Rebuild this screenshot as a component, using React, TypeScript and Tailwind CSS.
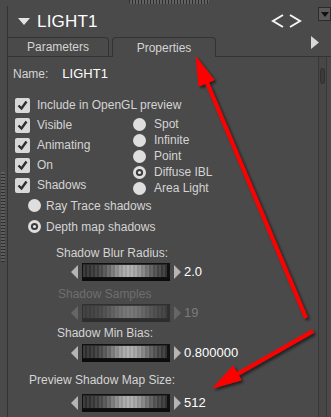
import type { ReactNode } from "react";

const STRIPES = Array.from({ length: 42 }, (_, i) => {
  const t = i / 41;
  // brightest a bit right of centre, dark at both ends
  const peak = Math.exp(-Math.pow((t - 0.55) / 0.28, 2));
  const wobble = i % 2 === 0 ? 10 : -6;
  return Math.round(48 + peak * 120 + wobble);
});

function Dial({ disabled = false }: { disabled?: boolean }) {
  return (
    <svg width="88" height="18" viewBox="0 0 88 18" className={disabled ? "opacity-45" : ""}>
      <rect x="0" y="0" width="88" height="18" fill="#111" />
      {STRIPES.map((v, i) => (
        <rect key={i} x={1 + i * 2} y={1} width={2} height={13} fill={`rgb(${v},${v},${v})`} />
      ))}
      <rect x="1" y="1" width="84" height="1" fill="#2a2a2a" />
      <rect x="0" y="15" width="88" height="3" fill="#0c0c0c" />
    </svg>
  );
}

function Arrow({ dir, disabled }: { dir: "l" | "r"; disabled?: boolean }) {
  const fill = disabled ? "#666" : "#b5b5b5";
  return (
    <svg width="7" height="14" viewBox="0 0 7 14">
      {dir === "l" ? <polygon points="7,0 0,7 7,14" fill={fill} /> : <polygon points="0,0 7,7 0,14" fill={fill} />}
    </svg>
  );
}

function DialRow({ value, disabled = false }: { value: string; disabled?: boolean }) {
  return (
    <div className="flex items-center h-[18px] pl-[63px]">
      <Arrow dir="l" disabled={disabled} />
      <div className="ml-[4px]">
        <Dial disabled={disabled} />
      </div>
      <div className="ml-[4px]">
        <Arrow dir="r" disabled={disabled} />
      </div>
      <span className={`ml-[3px] text-[13px] ${disabled ? "text-[#7a7a7a]" : "text-white"}`}>{value}</span>
    </div>
  );
}

function CheckBox() {
  return (
    <svg width="15" height="15" viewBox="0 0 15 15" className="shrink-0">
      <rect x="0" y="0" width="15" height="15" rx="2" fill="#d9d9d9" />
      <polyline points="3.5,7.5 6.5,10.5 11.5,3.5" fill="none" stroke="#2e2e2e" strokeWidth="2.4" />
    </svg>
  );
}

function Radio({ on = false }: { on?: boolean }) {
  return (
    <svg width="13" height="13" viewBox="0 0 13 13" className="shrink-0">
      <circle cx="6.5" cy="6.5" r="6.5" fill="#dedede" />
      {on && (
        <>
          <circle cx="6.5" cy="6.5" r="3.6" fill="#3a3a3a" />
          <circle cx="6.5" cy="6.5" r="1.6" fill="#e6e6e6" />
        </>
      )}
    </svg>
  );
}

function CheckRow({ children }: { children: ReactNode }) {
  return (
    <div className="flex items-center h-[20px] gap-[7px]">
      <CheckBox />
      <span>{children}</span>
    </div>
  );
}

function RadioRow({ on, children }: { on?: boolean; children: ReactNode }) {
  return (
    <div className="flex items-center h-[16px] gap-[8px]">
      <Radio on={on} />
      <span>{children}</span>
    </div>
  );
}

export default function App() {
  return (
    <div className="relative w-[331px] h-[417px] overflow-hidden bg-[#4a4a4a] text-[12px] text-[#d4d4d4] font-['Liberation_Sans',Arial,sans-serif]">
      {/* top splitter grip */}
      <div className="flex justify-center h-[6px] pl-[6px]">
        <div className="w-[80px] h-[4px] bg-[repeating-linear-gradient(90deg,#2d2d2d_0px,#2d2d2d_1px,#626262_1px,#626262_3px)] rounded-b-[2px]" />
      </div>

      <div className="flex h-[411px]">
        {/* left gutter with splitter dots */}
        <div className="w-[7px] shrink-0 flex flex-col">
          <div className="mt-[166px] ml-[1px] w-[4px] h-[90px] bg-[repeating-linear-gradient(0deg,#2e2e2e_0px,#2e2e2e_1px,#5c5c5c_1px,#5c5c5c_3px)]" />
        </div>

        <div className="flex-1 flex flex-col border-l border-[#333]">
          {/* header */}
          <div className="flex items-center h-[31px]">
            <svg width="12" height="8" viewBox="0 0 12 8" className="ml-[10px]">
              <polygon points="0,0 12,0 6,7" fill="#e4e4e4" />
            </svg>
            <span className="ml-[7px] text-[17px] text-white tracking-[0.2px]">LIGHT1</span>
            <div className="ml-auto flex items-center gap-[5px] mr-[16px] -mt-[1px]">
              <svg width="13" height="14" viewBox="0 0 13 14">
                <polyline points="12,1 2,7 12,13" fill="none" stroke="#f4f4f4" strokeWidth="2" />
              </svg>
              <svg width="13" height="14" viewBox="0 0 13 14">
                <polyline points="1,1 11,7 1,13" fill="none" stroke="#f4f4f4" strokeWidth="2" />
              </svg>
            </div>
            <div className="self-start mt-[1px] w-[13px] h-[14px] border border-[#2b2b2b] bg-[#5a5a5a] flex items-center justify-center">
              <svg width="8" height="5" viewBox="0 0 8 5">
                <polygon points="0,0 8,0 4,5" fill="#111" />
              </svg>
            </div>
          </div>

          {/* tabs */}
          <div className="flex items-end h-[20px]">
            <div className="w-[101px] h-[20px] border-t border-r border-b border-[#333] rounded-tr-[4px] flex items-center justify-center">
              Parameters
            </div>
            <div className="w-[3px] border-b border-[#333]" />
            <div className="w-[104px] h-[20px] border-t border-l border-r border-[#333] rounded-t-[4px] flex items-center justify-center">
              Properties
            </div>
            <div className="flex-1 h-[20px] border-b border-[#333] flex justify-end">
              <svg width="8" height="13" viewBox="0 0 8 13" className="mr-[12px] -mt-[1px]">
                <polygon points="0,0 8,6.5 0,13" fill="#d8d8d8" />
              </svg>
            </div>
          </div>

          {/* content */}
          <div className="flex flex-1">
            <div className="flex-1 flex flex-col">
              <div className="flex items-center h-[16px] mt-[9px] pl-[5px]">
                <span>Name:</span>
                <span className="ml-[14px] text-white text-[13px]">LIGHT1</span>
              </div>

              <div className="mt-[13px] pl-[7px]">
                <CheckRow>Include in OpenGL preview</CheckRow>
                <div className="flex">
                  <div className="w-[118px]">
                    <CheckRow>Visible</CheckRow>
                    <CheckRow>Animating</CheckRow>
                    <CheckRow>On</CheckRow>
                    <CheckRow>Shadows</CheckRow>
                  </div>
                  <div className="pt-[1px]">
                    <RadioRow>Spot</RadioRow>
                    <RadioRow>Infinite</RadioRow>
                    <RadioRow>Point</RadioRow>
                    <RadioRow on>Diffuse IBL</RadioRow>
                    <RadioRow>Area Light</RadioRow>
                  </div>
                </div>
              </div>

              <div className="pl-[20px] -mt-[1px]">
                <div className="flex items-center h-[21px] gap-[5px]">
                  <Radio />
                  <span>Ray Trace shadows</span>
                </div>
                <div className="flex items-center h-[21px] gap-[5px]">
                  <Radio on />
                  <span>Depth map shadows</span>
                </div>
              </div>

              <div className="mt-[8px] h-[16px] flex items-center pl-[48px]">Shadow Blur Radius:</div>
              <div className="mt-[2px]">
                <DialRow value="2.0" />
              </div>

              <div className="mt-[5px] h-[16px] flex items-center pl-[50px] text-[#6e6e6e]">Shadow Samples</div>
              <div className="mt-[2px]">
                <DialRow value="19" disabled />
              </div>

              <div className="mt-[3px] h-[16px] flex items-center pl-[49px]">Shadow Min Bias:</div>
              <div className="mt-[3px]">
                <DialRow value="0.800000" />
              </div>

              <div className="mt-[10px] h-[16px] flex items-center pl-[21px]">Preview Shadow Map Size:</div>
              <div className="mt-[6px]">
                <DialRow value="512" />
              </div>
            </div>

            {/* scroll bar */}
            <div className="w-[9px] mr-[4px] border-l border-r border-[#383838] bg-[#474747] flex justify-center">
              <div className="mt-[11px] w-[5px] h-[16px] rounded-full bg-[#3b3b3b] border border-[#303030]" />
            </div>
          </div>
        </div>
      </div>

      {/* red annotation arrows */}
      <svg className="absolute inset-0 pointer-events-none" width="331" height="417" viewBox="0 0 331 417">
        <defs>
          <filter id="sh" x="-20%" y="-20%" width="140%" height="140%">
            <feDropShadow dx="2" dy="2" stdDeviation="1.5" floodColor="#000" floodOpacity="0.6" />
          </filter>
        </defs>
        <g filter="url(#sh)" fill="#ff0000" stroke="#ff0000">
          <line x1="306" y1="318" x2="205" y2="78" strokeWidth="4" />
          <polygon points="196,57 214,80 199,86" strokeWidth="1" />
          <line x1="313" y1="331" x2="234" y2="376" strokeWidth="4" />
          <polygon points="213,388 241,380 233,366" strokeWidth="1" />
        </g>
      </svg>
    </div>
  );
}
